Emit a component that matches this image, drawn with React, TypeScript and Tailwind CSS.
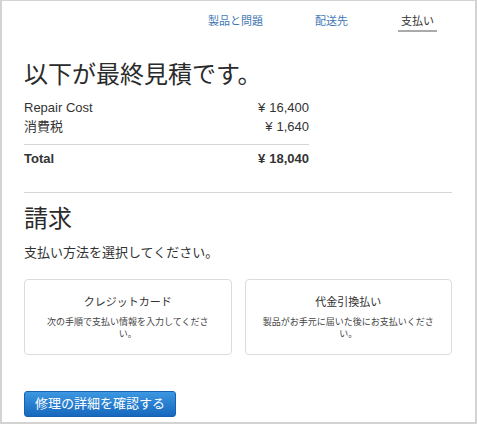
import React from 'react';

const FONT = '"Liberation Sans", "Noto Sans CJK JP", sans-serif';

const NAV = [
  { label: '製品と問題', active: false },
  { label: '配送先', active: false },
  { label: '支払い', active: true },
];

const ROWS = [
  { label: 'Repair Cost', value: '16,400' },
  { label: '消費税', value: '1,640' },
];

const PAYMENT_OPTIONS = [
  { title: 'クレジットカード', lines: ['次の手順で支払い情報を入力してくださ', 'い。'] },
  { title: '代金引換払い', lines: ['製品がお手元に届いた後にお支払いくださ', 'い。'] },
];

const Yen = ({ v }: { v: string }) => (
  <span>
    <span className="mr-[4px]">¥</span>
    {v}
  </span>
);

export default function App() {
  return (
    <div
      className="w-[477px] h-[424px] overflow-hidden bg-white border-2 border-t border-[#d3d3d3] text-[#333]"
      style={{ fontFamily: FONT }}
    >
      {/* Step nav */}
      <div className="flex justify-end items-start pt-[13px] pr-[38px]">
        {NAV.map((n, i) => (
          <div
            key={n.label}
            className={`text-[11px] leading-[14px] ${i === 1 ? 'ml-[52px]' : i === 2 ? 'ml-[50px]' : ''} ${
              n.active ? 'text-[#333] px-[3px] pb-[2px] border-b-2 border-[#aaa]' : 'text-[#3f78b3]'
            }`}
          >
            {n.label}
          </div>
        ))}
      </div>

      <div className="pl-[22px] pr-[23px]">
        {/* Estimate */}
        <h1 className="mt-[27px] text-[24px] leading-[32px] font-normal text-[#2b2b2b]">以下が最終見積です。</h1>

        <div className="w-[285px] mt-[7px] text-[13px] leading-[19px]">
          {ROWS.map(r => (
            <div key={r.label} className="flex justify-between">
              <span>{r.label}</span>
              <Yen v={r.value} />
            </div>
          ))}
          <div className="mt-[8px] h-px bg-[#d6d6d6]" />
          <div className="flex justify-between mt-[4px] font-bold">
            <span>Total</span>
            <Yen v="18,040" />
          </div>
        </div>

        <div className="mt-[24px] h-px bg-[#d6d6d6]" />

        {/* Billing */}
        <h2 className="mt-[10px] text-[24px] leading-[32px] font-normal text-[#2b2b2b]">請求</h2>
        <p className="mt-[9px] text-[13px] leading-[18px]">支払い方法を選択してください。</p>

        <div className="mt-[17px] grid grid-cols-2 gap-[13px]">
          {PAYMENT_OPTIONS.map(o => (
            <div
              key={o.title}
              className="h-[76px] rounded-[4px] border border-[#dcdcdc] pt-[15px] text-center"
            >
              <div className="text-[11px] leading-[14px] text-[#333]">{o.title}</div>
              <div className="mt-[7px] text-[9px] leading-[12px] text-[#444]">
                {o.lines[0]}
                <br />
                {o.lines[1]}
              </div>
            </div>
          ))}
        </div>

        <button className="mt-[36px] h-[26px] px-[10px] rounded-[3px] border border-[#1762b0] bg-gradient-to-b from-[#3d97e1] to-[#1568bd] text-white text-[13px] leading-[24px]">
          修理の詳細を確認する
        </button>
      </div>
    </div>
  );
}
